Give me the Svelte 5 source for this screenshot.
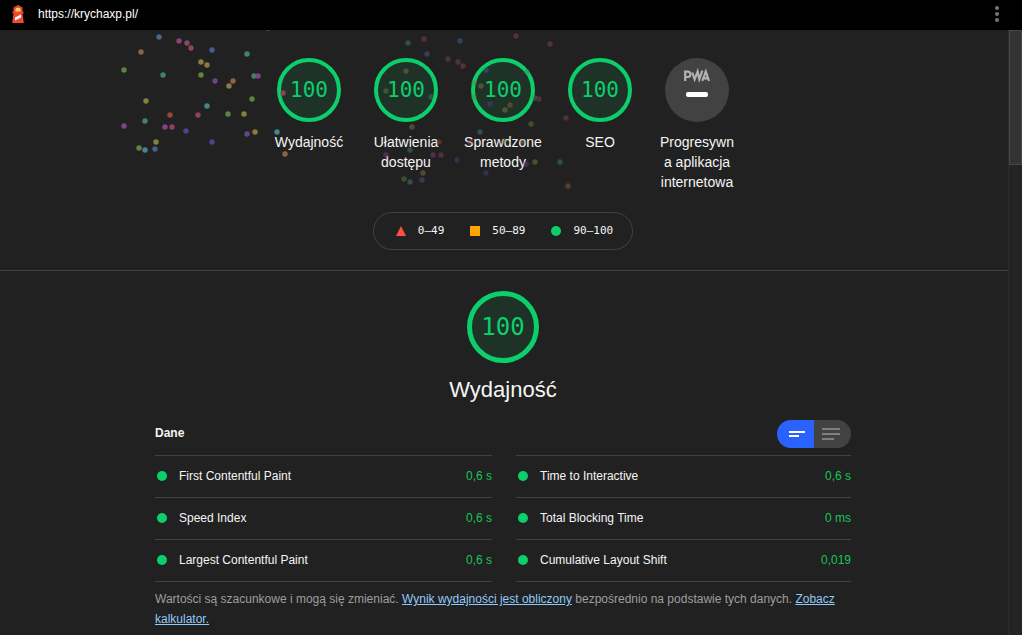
<script>
  const scores = [
    { label: 'Wydajność', value: 100 },
    { label: 'Ułatwienia dostępu', value: 100 },
    { label: 'Sprawdzone metody', value: 100 },
    { label: 'SEO', value: 100 }
  ];

  const metricColumns = [
    [
      { name: 'First Contentful Paint', value: '0,6 s' },
      { name: 'Speed Index', value: '0,6 s' },
      { name: 'Largest Contentful Paint', value: '0,6 s' }
    ],
    [
      { name: 'Time to Interactive', value: '0,6 s' },
      { name: 'Total Blocking Time', value: '0 ms' },
      { name: 'Cumulative Layout Shift', value: '0,019' }
    ]
  ];

  const C = {
    blue: '#456a92', navy: '#435c93', pink: '#8a4272', red: '#91493f', orange: '#91643f',
    gold: '#8f7840', olive: '#86803f', green: '#418560', lime: '#5b8540', purple: '#694290',
    magenta: '#84408a', crimson: '#8c425c', teal: '#42868b', indigo: '#4c4290'
  };

  // Firework sparks: x, y, colour
  const nearSparks = [
    [159, 37, 'blue'], [179, 41, 'pink'], [187, 43, 'pink'], [191, 48, 'red'], [141, 52, 'orange'],
    [212, 50, 'navy'], [201, 62, 'olive'], [207, 65, 'gold'], [247, 54, 'green'], [124, 70, 'lime'],
    [163, 75, 'green'], [201, 75, 'lime'], [215, 81, 'purple'], [233, 81, 'orange'], [229, 86, 'olive'],
    [254, 76, 'green'], [258, 76, 'magenta'], [146, 101, 'olive'], [252, 99, 'lime'], [207, 106, 'teal'],
    [170, 115, 'red'], [198, 115, 'crimson'], [228, 114, 'lime'], [244, 114, 'olive'], [145, 121, 'green'],
    [124, 126, 'magenta'], [165, 127, 'magenta'], [172, 127, 'crimson'], [186, 131, 'indigo'],
    [247, 134, 'purple'], [255, 132, 'gold'], [277, 132, 'teal'], [156, 142, 'olive'], [139, 148, 'lime'],
    [145, 150, 'teal'], [155, 149, 'navy'], [212, 142, 'indigo'], [285, 154, 'orange'], [283, 93, 'crimson'],
    [268, 28, 'pink']
  ];
  const farSparks = [
    [424, 39, 'red'], [408, 43, 'green'], [427, 54, 'blue'], [448, 59, 'pink'], [406, 71, 'gold'],
    [386, 91, 'lime'], [431, 97, 'green'], [412, 127, 'olive'], [439, 142, 'red'], [410, 150, 'green'],
    [386, 155, 'magenta'], [433, 155, 'magenta'], [441, 155, 'crimson'], [423, 173, 'olive'],
    [404, 179, 'lime'], [410, 182, 'teal'], [422, 180, 'navy'], [460, 41, 'blue'], [516, 36, 'red'],
    [550, 44, 'pink'], [458, 62, 'pink'], [463, 66, 'red'], [486, 70, 'blue'], [474, 83, 'lime'],
    [474, 97, 'lime'], [481, 86, 'olive'], [490, 104, 'indigo'], [510, 105, 'orange'], [505, 110, 'olive'],
    [527, 72, 'green'], [535, 98, 'green'], [539, 99, 'pink'], [531, 124, 'lime'], [566, 118, 'crimson'],
    [480, 132, 'teal'], [470, 142, 'crimson'], [504, 141, 'lime'], [523, 142, 'gold'], [457, 160, 'indigo'],
    [526, 164, 'purple'], [535, 162, 'olive'], [560, 162, 'teal'], [486, 173, 'indigo'], [568, 186, 'orange']
  ];

  let expanded = $state(false);
</script>

<div class="page">
  <header class="topbar">
    <svg class="logo" viewBox="0 0 14 20" aria-hidden="true">
      <path d="M7 1 11.500 3.500V7.500h1v2h-1L12.800 19H1.200L2.500 9.500h-1v-2h1V3.500z" fill="#f0492e" />
      <path d="M2.500 3.500 7 1l4.500 2.500v1h-9z" fill="#d8392a" />
      <path d="M4.500 7.500V5.500a2.500 2 0 0 1 5 0v2z" fill="#fbd06b" />
      <path d="M4 13.500 10 10.500v3L4 16.500z" fill="#fff" />
    </svg>
    <a class="url" href="https://krychaxp.pl/">https://krychaxp.pl/</a>
    <button class="menu" aria-label="Menu">
      <svg width="4" height="16" viewBox="0 0 4 16">
        <circle cx="2" cy="2" r="2" /><circle cx="2" cy="8" r="2" /><circle cx="2" cy="14" r="2" />
      </svg>
    </button>
  </header>

  <div class="body">
    <main>
      <section class="hero">
        <div class="scores">
          {#each scores as s}
            <a class="score" href="#details">
              <span class="gauge">{s.value}</span>
              <span class="label">{s.label}</span>
            </a>
          {/each}
          <a class="score" href="#details">
            <svg class="pwa" viewBox="0 0 64 64" aria-hidden="true">
              <circle cx="32" cy="32" r="32" fill="#424242" />
              <g fill="none" stroke="#b3b3b3" stroke-width="2.200">
                <path d="M20.200 23V13.600h2.600a2.700 2.700 0 0 1 0 5.400h-2.600" />
                <path d="M27.300 14.500 29.600 21.300 32.600 13.500 34.300 21.300 37.300 12.700" />
                <path d="M37.300 22.800 40.800 13.600 44 23M39 20.300h4" />
              </g>
              <rect x="21" y="34" width="22" height="5" rx="2" fill="#fff" />
            </svg>
            <span class="label">Progresywna aplikacja internetowa</span>
          </a>
        </div>
        <div class="legend">
          <span><svg viewBox="0 0 10 10"><path d="M5 0 10 10H0z" fill="#ff4e42" /></svg>0–49</span>
          <span><svg viewBox="0 0 10 10"><path d="M0 0h10v10H0z" fill="#ffa400" /></svg>50–89</span>
          <span><svg viewBox="0 0 10 10"><circle cx="5" cy="5" r="5" fill="#0cce6b" /></svg>90–100</span>
        </div>
        <svg class="sparks" viewBox="116 30 460 170" aria-hidden="true">
          {#each nearSparks as [x, y, c]}<circle cx={x} cy={y} r="2.700" fill={C[c]} />{/each}
          <g opacity="0.45">
            {#each farSparks as [x, y, c]}<circle cx={x} cy={y} r="2.700" fill={C[c]} />{/each}
          </g>
        </svg>
      </section>

      <section class="category" id="details">
        <span class="gauge large">100</span>
        <h1>Wydajność</h1>
        <div class="metrics-head">
          <h2>Dane</h2>
          <div class="toggle">
            <button class:active={!expanded} aria-label="Widok zwarty" onclick={() => (expanded = false)}>
              <svg width="18" height="14" viewBox="0 0 18 14"><path d="M1 4h16v2H1zM1 8h10v2H1z" /></svg>
            </button>
            <button class:active={expanded} aria-label="Widok rozwinięty" onclick={() => (expanded = true)}>
              <svg width="18" height="14" viewBox="0 0 18 14"><path d="M0 1h18v2H0zM0 6h18v2H0zM0 11h12v2H0z" /></svg>
            </button>
          </div>
        </div>
        <div class="metrics">
          {#each metricColumns as col}
            <table>
              <tbody>
                {#each col as m}
                  <tr>
                    <th scope="row"><i></i>{m.name}</th>
                    <td>{m.value}</td>
                  </tr>
                {/each}
              </tbody>
            </table>
          {/each}
        </div>
        <p>
          Wartości są szacunkowe i mogą się zmieniać. <a href="#details">Wynik wydajności jest obliczony</a>
          bezpośrednio na podstawie tych danych. <a href="#details">Zobacz kalkulator.</a>
        </p>
      </section>
    </main>
    <div class="track"><div class="thumb"></div></div>
  </div>
</div>

<style>
  :global(body) {
    margin: 0;
    background: #212121;
  }
  .page {
    display: flex;
    flex-direction: column;
    min-height: 100vh;
    background: #212121;
    color: #f5f5f5;
    font: 12px/20px 'Liberation Sans', Arial, sans-serif;
  }
  .topbar {
    display: flex;
    align-items: center;
    height: 30px;
    padding: 0 23px 2px 11px;
    box-sizing: border-box;
    background: #000;
  }
  .logo {
    width: 14px;
    height: 20px;
  }
  .url {
    margin-left: 13px;
    color: #fff;
    text-decoration: none;
  }
  .menu {
    display: flex;
    margin-left: auto;
    padding: 0;
    border: 0;
    background: none;
    fill: #757575;
  }
  .body {
    display: flex;
    flex: 1;
  }
  main {
    flex: 1;
    min-width: 0;
  }
  .track {
    flex: none;
    width: 14px;
    box-sizing: border-box;
    border-left: 1px solid #2c2c2c;
    background: #242424;
  }
  .thumb {
    height: 133px;
    border: 1px solid #484848;
    background: #333;
  }
  .hero {
    position: relative;
    display: flex;
    flex-direction: column;
    align-items: center;
    gap: 20px;
    padding: 28px 2px 20px 0;
    border-bottom: 1px solid #424242;
  }
  .scores {
    display: flex;
    justify-content: center;
  }
  .score {
    display: flex;
    flex-direction: column;
    align-items: center;
    gap: 10px;
    width: 97px;
    color: inherit;
    text-decoration: none;
  }
  .label {
    width: 80px;
    font-size: 14px;
    text-align: center;
    overflow-wrap: anywhere;
  }
  .gauge {
    display: flex;
    align-items: center;
    justify-content: center;
    box-sizing: border-box;
    width: 64px;
    height: 64px;
    border: 4px solid #0cce6b;
    border-radius: 50%;
    background: #1f3228;
    color: #0cce6b;
    font: 21px/1 'DejaVu Sans Mono', monospace;
  }
  .gauge.large {
    width: 72px;
    height: 72px;
    border-width: 5px;
    font-size: 24px;
  }
  .pwa {
    width: 64px;
    height: 64px;
  }
  .legend {
    display: flex;
    align-items: center;
    gap: 26px;
    height: 38px;
    padding: 0 19px 0 22px;
    box-sizing: border-box;
    border: 1px solid #424242;
    border-radius: 19px;
    font: 11px/20px 'DejaVu Sans Mono', monospace;
  }
  .legend span {
    display: flex;
    align-items: center;
    gap: 12px;
  }
  .legend svg {
    width: 10px;
    height: 10px;
  }
  .sparks {
    position: absolute;
    top: 0;
    left: 50%;
    width: 460px;
    height: 170px;
    margin-left: -388px;
    pointer-events: none;
  }
  .category {
    display: flex;
    flex-direction: column;
    align-items: center;
    max-width: 696px;
    margin: 0 auto;
    padding: 20px 2px 6px 0;
  }
  h1 {
    margin: 13px 0 16px;
    font-size: 22px;
    font-weight: 400;
    line-height: 28px;
  }
  .metrics-head {
    display: flex;
    justify-content: space-between;
    align-items: center;
    width: 100%;
    padding-bottom: 7px;
  }
  h2 {
    margin: 0;
    padding-bottom: 2px;
    font-size: 12px;
  }
  .toggle {
    display: flex;
    overflow: hidden;
    border-radius: 14px;
  }
  .toggle button {
    display: flex;
    align-items: center;
    justify-content: center;
    width: 37px;
    height: 28px;
    padding: 0 3px 0 0;
    border: 0;
    background: #424242;
    fill: #808080;
  }
  .toggle button:first-child {
    padding: 0 0 0 3px;
  }
  .toggle .active {
    background: #2962ff;
    fill: #fff;
  }
  .metrics {
    display: grid;
    grid-template-columns: 337fr 335fr;
    gap: 24px;
    width: 100%;
  }
  table {
    border-collapse: collapse;
    width: 100%;
    border-bottom: 1px solid #424242;
  }
  th,
  td {
    height: 39px;
    padding: 0 0 2px;
    border-top: 1px solid #424242;
    font-weight: 400;
  }
  th {
    text-align: left;
  }
  td {
    color: #18c558;
    text-align: right;
  }
  i {
    display: inline-block;
    width: 10px;
    height: 10px;
    margin: 0 12px 0 2px;
    border-radius: 50%;
    background: #0cce6b;
    vertical-align: -1px;
  }
  p {
    width: 100%;
    margin: 7px 0 0;
    color: #9e9e9e;
  }
  p a {
    color: #90caf9;
  }
</style>
